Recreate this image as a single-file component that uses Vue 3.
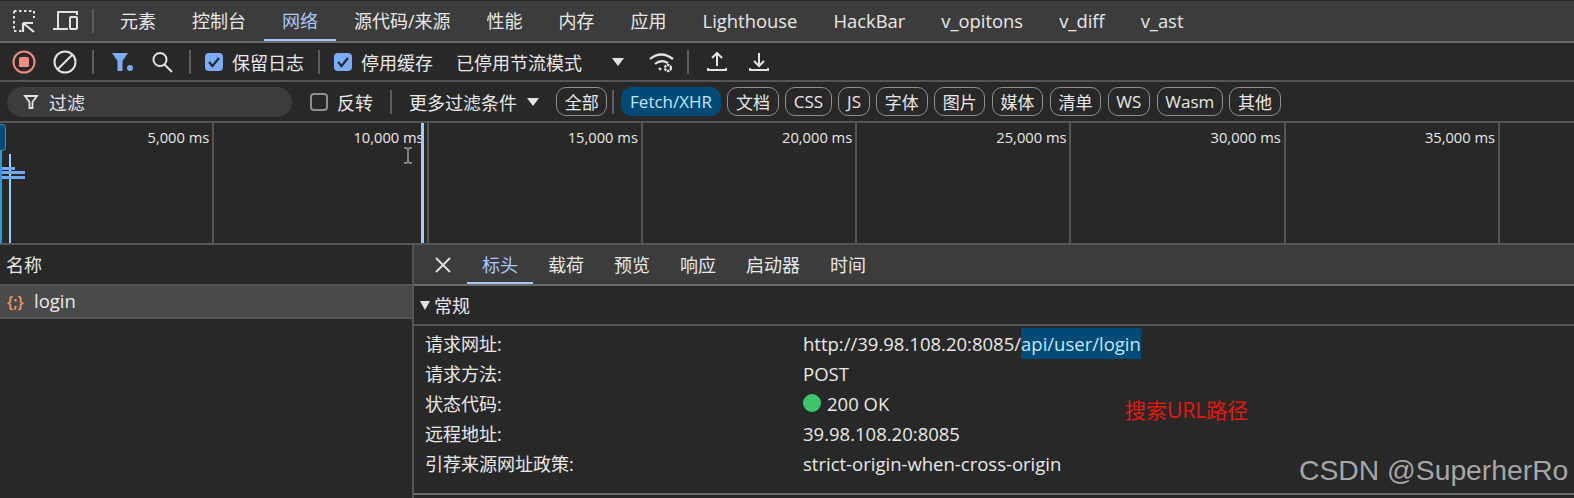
<script setup>
const tabs = [
  { label: '元素' }, { label: '控制台' }, { label: '网络', active: true }, { label: '源代码/来源' },
  { label: '性能' }, { label: '内存' }, { label: '应用' }, { label: 'Lighthouse', latin: true },
  { label: 'HackBar', latin: true }, { label: 'v_opitons', latin: true }, { label: 'v_diff', latin: true }, { label: 'v_ast', latin: true }
];
const chips = ['文档', 'CSS', 'JS', '字体', '图片', '媒体', '清单', 'WS', 'Wasm', '其他'];
const ticks = ['5,000 ms', '10,000 ms', '15,000 ms', '20,000 ms', '25,000 ms', '30,000 ms', '35,000 ms', ''];
const detailTabs = ['标头', '载荷', '预览', '响应', '启动器', '时间'];
const rows = [
  { key: '请求网址:', value: 'url' },
  { key: '请求方法:', value: 'POST' },
  { key: '状态代码:', value: 'status' },
  { key: '远程地址:', value: '39.98.108.20:8085' },
  { key: '引荐来源网址政策:', value: 'strict-origin-when-cross-origin' }
];
</script>

<template>
  <div class="devtools">
    <div class="tabbar">
      <svg class="icon first" width="26" height="24" viewBox="0 0 26 24" fill="none" stroke="#e3e3e3" stroke-width="2">
        <path d="M3 2h20M3 2v20M3 22h8M23 2v7" stroke-dasharray="2.5 2.5" />
        <path d="M12 14h10M12 14v9M12 14l11 9" stroke-width="2.2" />
      </svg>
      <svg class="icon second" width="26" height="22" viewBox="0 0 26 22" fill="none" stroke="#e3e3e3" stroke-width="2">
        <path d="M6 19V2h19v3M1 19h15" />
        <rect x="18" y="7" width="7" height="12" rx="1" />
      </svg>
      <span class="vsep sep-tabs"></span>
      <div class="tabs">
        <span v-for="t in tabs" :key="t.label" class="tab" :class="{ active: t.active, latin: t.latin }">{{ t.label }}</span>
      </div>
    </div>

    <div class="toolbar">
      <svg class="tool-icon record" width="24" height="24" viewBox="0 0 24 24">
        <circle cx="12" cy="12" r="10.500" fill="none" stroke="#f28b82" stroke-width="2" />
        <rect x="7" y="7" width="10" height="10" rx="1.500" fill="#f28b82" />
      </svg>
      <svg class="tool-icon clear" width="24" height="24" viewBox="0 0 24 24" fill="none" stroke="#e3e3e3" stroke-width="2">
        <circle cx="12" cy="12" r="10.500" />
        <path d="M5 19L19 5" />
      </svg>
      <span class="vsep sep-a"></span>
      <svg class="tool-icon funnel" width="24" height="22" viewBox="0 0 24 22">
        <path d="M1 2h16l-5.500 8v10h-5V10z" fill="#7cacf8" />
        <circle cx="19" cy="17" r="3" fill="#7cacf8" />
      </svg>
      <svg class="tool-icon search" width="22" height="22" viewBox="0 0 22 22" fill="none" stroke="#e3e3e3" stroke-width="2">
        <circle cx="9" cy="8.500" r="6.500" />
        <path d="M13.500 13.500l7.500 7.500" />
      </svg>
      <span class="vsep sep-b"></span>
      <span class="check on">
        <svg width="14" height="12" viewBox="0 0 14 12" fill="none" stroke="#1f2a38" stroke-width="2.200"><path d="M2 6l3.500 4L12 2" /></svg>
      </span>
      <span class="tool-text">保留日志</span>
      <span class="vsep sep-c"></span>
      <span class="check on">
        <svg width="14" height="12" viewBox="0 0 14 12" fill="none" stroke="#1f2a38" stroke-width="2.200"><path d="M2 6l3.500 4L12 2" /></svg>
      </span>
      <span class="tool-text">停用缓存</span>
      <span class="tool-text throttle">已停用节流模式</span>
      <span class="caret big"></span>
      <svg class="tool-icon wifi" width="26" height="22" viewBox="0 0 26 22" fill="none" stroke="#e3e3e3" stroke-width="2.200">
        <path d="M2 8Q13-1 25 8M7 13Q13 8 20 12M11 17l2 2" />
        <circle cx="20" cy="17" r="3" stroke-width="2.400" stroke-dasharray="2.400 0.800" />
      </svg>
      <span class="vsep sep-d"></span>
      <svg class="tool-icon upload" width="22" height="24" viewBox="0 0 22 24" fill="none" stroke="#e3e3e3" stroke-width="2">
        <path d="M11 16V3M6 8l5-5 5 5M2 18v2h18v-2" />
      </svg>
      <svg class="tool-icon download" width="22" height="24" viewBox="0 0 22 24" fill="none" stroke="#e3e3e3" stroke-width="2">
        <path d="M11 3v13M6 11l5 5 5-5M2 18v2h18v-2" />
      </svg>
    </div>

    <div class="filterbar">
      <div class="filter-input">
        <svg width="16" height="16" viewBox="0 0 16 16" fill="none" stroke="#e3e3e3" stroke-width="1.800"><path d="M2 2h12L9.500 8v6h-3V8z" /></svg>
        <span>过滤</span>
      </div>
      <span class="check off"></span>
      <span class="tool-text">反转</span>
      <span class="vsep sep-e"></span>
      <span class="tool-text more">更多过滤条件</span>
      <span class="caret"></span>
      <span class="chip all">全部</span>
      <span class="vsep sep-f"></span>
      <span class="chip selected">Fetch/XHR</span>
      <span v-for="c in chips" :key="c" class="chip">{{ c }}</span>
    </div>

    <div class="overview">
      <div v-for="(t, i) in ticks" :key="i" class="tick">{{ t }}</div>
      <span class="handle"></span>
      <span class="mark-load"></span>
      <span class="mark-dom"></span>
      <span class="bar bar-a"></span>
      <span class="bar bar-b"></span>
      <span class="bar bar-c"></span>
      <span class="mark-end"></span>
      <svg class="ibeam" width="10" height="17" viewBox="0 0 10 17" fill="none" stroke="#9a9a9a" stroke-width="1.500">
        <path d="M1 1h2.500L5 2.500 6.500 1H9M5 2.500v12M1 16h2.500L5 14.500 6.500 16H9" />
      </svg>
    </div>

    <div class="split">
      <div class="list">
        <div class="list-head">名称</div>
        <div class="list-row">
          <span class="json-icon">{;}</span>
          <span>login</span>
        </div>
      </div>
      <div class="detail">
        <div class="detail-tabs">
          <svg class="close" width="16" height="16" viewBox="0 0 16 16" fill="none" stroke="#e3e3e3" stroke-width="1.800"><path d="M1 1l14 14M15 1L1 15" /></svg>
          <span v-for="(d, i) in detailTabs" :key="d" class="dtab" :class="{ active: i === 0 }">{{ d }}</span>
        </div>
        <div class="section-head"><span class="tri"></span>常规</div>
        <div class="section-body">
          <div v-for="r in rows" :key="r.key" class="row">
            <span class="key">{{ r.key }}</span>
            <span v-if="r.value === 'url'">http://39.98.108.20:8085/<span class="sel">api/user/login</span></span>
            <span v-else-if="r.value === 'status'" class="status"><i class="dot"></i>200 OK</span>
            <span v-else>{{ r.value }}</span>
          </div>
          <span class="note">搜索URL路径</span>
          <span class="watermark">CSDN @SuperherRo</span>
        </div>
      </div>
    </div>
  </div>
</template>

<style>
html, body {
  margin: 0;
  background: #282828;
  overflow: hidden;
}
</style>

<style scoped>
.devtools {
  width: 1574px;
  height: 498px;
  overflow: hidden;
  color: #e8e8e8;
  background: #282828;
  font-family: "Open Sans", "Noto Sans CJK SC", sans-serif;
  font-size: 18px;
}
.tabbar {
  height: 40px;
  display: flex;
  align-items: center;
  background: #3c3c3c;
  border-top: 1px solid #2a2a2a;
  border-bottom: 2px solid #6b6b6b;
}
.icon.first { margin-left: 11px; }
.icon.second { margin-left: 15px; }
.vsep {
  width: 2px;
  height: 24px;
  background: #5c5c5c;
  flex: none;
}
.sep-tabs { margin: 0 8px 0 14px; }
.sep-a { margin: 0 17px 0 15px; }
.sep-b { margin: 0 14px 0 16px; }
.sep-c { margin: 0 14px; }
.sep-d { margin: 0 17px 0 13px; }
.sep-e { margin: 0 17px; }
.sep-f { margin: 0 7px 0 5px; }
.tabs {
  display: flex;
  height: 100%;
}
.tab {
  display: flex;
  align-items: center;
  padding: 0 18px;
  white-space: nowrap;
  box-sizing: border-box;
  border-bottom: 2px solid transparent;
}
.tab.latin { font-size: 18.400px; }
.tab.active {
  color: #a8c7fa;
  border-bottom-color: #a8c7fa;
}
.toolbar {
  height: 37px;
  display: flex;
  align-items: center;
  border-bottom: 2px solid #555;
}
.tool-icon { flex: none; }
.record { margin-left: 12px; }
.clear { margin-left: 17px; }
.search { margin-left: 16px; }
.check {
  width: 18px;
  height: 18px;
  flex: none;
  border-radius: 4px;
  box-sizing: border-box;
  display: inline-flex;
  align-items: center;
  justify-content: center;
}
.check.on { background: #7cacf8; }
.check.off { border: 2px solid #8e8e8e; margin-left: 18px; }
.tool-text {
  margin-left: 9px;
  white-space: nowrap;
}
.tool-text.throttle { margin-left: 23px; }
.tool-text.more { margin-left: 0; }
.caret {
  width: 0;
  height: 0;
  border-left: 6px solid transparent;
  border-right: 6px solid transparent;
  border-top: 8px solid #e3e3e3;
  margin-left: 10px;
  flex: none;
}
.caret.big { margin-left: 30px; }
.wifi { margin-left: 24px; }
.download { margin-left: 20px; }
.filterbar {
  height: 39px;
  display: flex;
  align-items: center;
  border-bottom: 2px solid #555;
}
.filter-input {
  width: 285px;
  height: 30px;
  margin-left: 7px;
  padding-left: 16px;
  box-sizing: border-box;
  display: flex;
  align-items: center;
  gap: 10px;
  border-radius: 15px;
  background: #3c3c3c;
  flex: none;
}
.chip {
  height: 29px;
  padding: 0 7.700px;
  border: 1.500px solid #8e8e8e;
  border-radius: 10px;
  box-sizing: border-box;
  display: flex;
  align-items: center;
  margin-right: 6.500px;
  font-size: 17px;
  flex: none;
}
.chip.all { margin-left: 17px; margin-right: 0; }
.chip.selected {
  background: #004a77;
  color: #c2e7ff;
  border-color: #004a77;
}
.overview {
  height: 120px;
  display: flex;
  position: relative;
  border-bottom: 2px solid #555;
}
.tick {
  width: 214.300px;
  height: 100%;
  flex: none;
  box-sizing: border-box;
  border-right: 2px solid #555;
  text-align: right;
  padding: 4px 3px 0 0;
  font-size: 14.700px;
  white-space: nowrap;
}
.handle {
  position: absolute;
  left: 0;
  top: 1px;
  width: 6px;
  height: 27px;
  background: #004a77;
  border: 1px solid #2b8ac6;
  border-left: none;
  border-radius: 0 4px 4px 0;
  box-sizing: border-box;
}
.mark-load {
  position: absolute;
  left: 0;
  top: 28px;
  width: 2px;
  height: 92px;
  background: #2b9bd8;
}
.mark-dom {
  position: absolute;
  left: 9px;
  top: 31px;
  width: 2px;
  height: 89px;
  background: #8ad4ff;
}
.bar {
  position: absolute;
  left: 2px;
  height: 3px;
  background: #6ea8f7;
}
.bar-a { top: 44px; width: 13px; }
.bar-b { top: 48px; width: 23px; }
.bar-c { top: 53px; width: 23px; }
.mark-end {
  position: absolute;
  left: 421px;
  top: 0;
  width: 3px;
  height: 120px;
  background: #a8c7fa;
}
.ibeam {
  position: absolute;
  left: 403px;
  top: 24px;
}
.split {
  display: flex;
  height: 255px;
}
.list {
  width: 412px;
  flex: none;
  border-right: 2px solid #555;
}
.list-head {
  height: 39px;
  display: flex;
  align-items: center;
  padding-left: 6px;
  border-bottom: 2px solid #555;
  line-height: 1;
}
.list-row {
  height: 31px;
  display: flex;
  align-items: center;
  padding-left: 7px;
  gap: 6px;
  background: #4a4a4a;
  border-bottom: 2px solid #555;
  font-size: 18.500px;
  line-height: 1;
}
.json-icon {
  color: #f29766;
  font-size: 16px;
  font-weight: 600;
  width: 21px;
  white-space: nowrap;
}
.detail {
  flex: 1;
  min-width: 0;
}
.detail-tabs {
  height: 39px;
  display: flex;
  align-items: stretch;
  background: #3c3c3c;
  border-bottom: 2px solid #6b6b6b;
}
.close {
  align-self: center;
  margin: 0 16px 0 21px;
}
.dtab {
  display: flex;
  align-items: center;
  padding: 0 15px;
  box-sizing: border-box;
  border-bottom: 2px solid transparent;
}
.dtab.active {
  color: #a8c7fa;
  border-bottom-color: #a8c7fa;
}
.section-head {
  height: 38px;
  display: flex;
  align-items: center;
  padding-left: 6px;
  border-bottom: 2px solid #555;
}
.tri {
  width: 0;
  height: 0;
  border-left: 5px solid transparent;
  border-right: 5px solid transparent;
  border-top: 9px solid #e3e3e3;
  margin-right: 4px;
}
.section-body {
  position: relative;
  height: 169px;
  padding-top: 2px;
  box-sizing: border-box;
  border-bottom: 2px solid #6b6b6b;
  font-size: 18.500px;
}
.row {
  height: 30px;
  display: flex;
  align-items: center;
  white-space: nowrap;
}
.key {
  width: 378px;
  margin-left: 11px;
  flex: none;
  font-size: 18px;
}
.sel {
  background: #004a77;
  color: #c2e7ff;
  padding: 3px 0;
}
.status {
  display: flex;
  align-items: center;
}
.dot {
  width: 18px;
  height: 18px;
  border-radius: 50%;
  background: #3ec46d;
  margin-right: 6px;
}
.note {
  position: absolute;
  left: 711px;
  top: 68px;
  color: #e8170c;
  font-size: 21px;
  white-space: nowrap;
}
.watermark {
  position: absolute;
  left: 885px;
  top: 128px;
  color: #a6a6a6;
  font-family: "Liberation Sans", sans-serif;
  font-size: 28.300px;
  white-space: nowrap;
}
</style>
